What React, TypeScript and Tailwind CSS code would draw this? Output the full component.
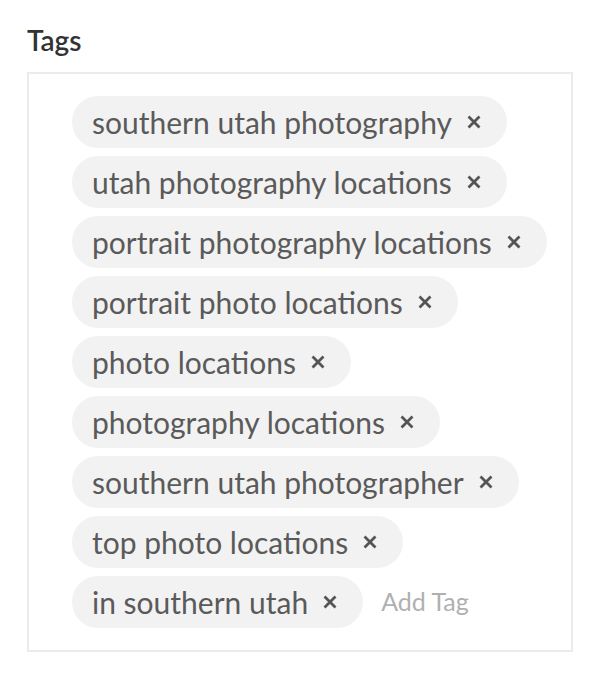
const tags = [
  "southern utah photography",
  "utah photography locations",
  "portrait photography locations",
  "portrait photo locations",
  "photo locations",
  "photography locations",
  "southern utah photographer",
  "top photo locations",
  "in southern utah",
];

function CloseIcon() {
  return (
    <svg width="14" height="14" viewBox="0 0 14 14" fill="none">
      <path
        d="M1.5 1.5L12.5 12.5M12.5 1.5L1.5 12.5"
        stroke="#555555"
        strokeWidth="2.8"
      />
    </svg>
  );
}

export default function App() {
  return (
    <div
      className="min-h-[700px] w-[608px] bg-white pl-[27px] pt-[26px]"
      style={{ fontFamily: "Lato, 'Open Sans', sans-serif" }}
    >
      <h2 className="text-[28px] font-semibold leading-none text-[#333333]">
        Tags
      </h2>
      <div className="mt-[18px] w-[546px] border-2 border-[#ebebeb] pb-[22px] pl-[43px] pr-[20px] pt-[22px]">
        <div className="flex flex-wrap items-center gap-x-[18px] gap-y-[8px]">
          {tags.map((t) => (
            <span
              key={t}
              className="flex h-[52px] items-center gap-[15px] rounded-full bg-[#f2f2f2] pl-[20px] pr-[26px] text-[30px] text-[#5a5a5a]"
            >
              {t}
              <CloseIcon />
            </span>
          ))}
          <input
            placeholder="Add Tag"
            className="w-[110px] bg-transparent text-[25px] text-[#555] outline-none placeholder:text-[#b0b0b0]"
          />
        </div>
      </div>
    </div>
  );
}
